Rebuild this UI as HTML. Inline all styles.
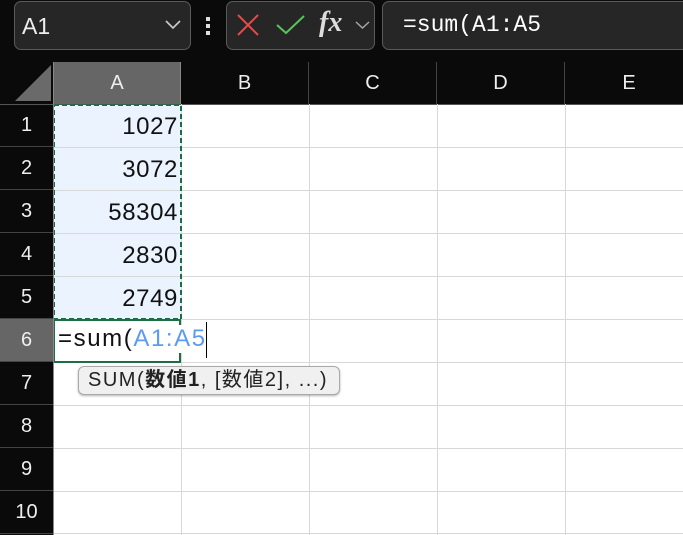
<!DOCTYPE html>
<html><head><meta charset="utf-8"><style>
*{margin:0;padding:0;box-sizing:border-box}
body{width:683px;height:535px;background:#0a0a0a;position:relative;overflow:hidden;font-family:"Liberation Sans","Noto Sans CJK JP",sans-serif}
.a{position:absolute}
.box{position:absolute;background:#262626;border:1px solid #5a5a5a;border-radius:7px}
.ch{position:absolute;top:62px;height:42px;color:#eee;font-size:20px;text-align:center;line-height:42px}
.rh{position:absolute;left:0;width:53px;height:43px;color:#eee;font-size:20px;text-align:center;line-height:43px;border-bottom:1px solid #444}
.num{position:absolute;left:54px;width:124px;text-align:right;font-size:24px;letter-spacing:0.6px;color:#111;height:43px;line-height:46px}
</style></head><body>
<div class="box" style="left:14px;top:1px;width:177px;height:49px"></div>
<div class="a" style="left:22px;top:13px;color:#eee;font-size:23px">A1</div>
<svg class="a" style="left:164px;top:18px" width="20" height="14"><path d="M2 3 L9 10 L16 3" stroke="#ccc" stroke-width="1.6" fill="none"/></svg>
<div class="a" style="left:206px;top:17px;width:4px;height:4px;background:#ddd"></div>
<div class="a" style="left:206px;top:24px;width:4px;height:4px;background:#ddd"></div>
<div class="a" style="left:206px;top:31px;width:4px;height:4px;background:#ddd"></div>
<div class="box" style="left:226px;top:1px;width:149px;height:49px"></div>
<svg class="a" style="left:236px;top:13px" width="26" height="26"><path d="M2 2 L22 22 M22 2 L2 22" stroke="#e84a4a" stroke-width="2" fill="none"/></svg>
<svg class="a" style="left:275px;top:13px" width="32" height="24"><path d="M2 12 L11 20 L29 3" stroke="#5bc35b" stroke-width="2" fill="none"/></svg>
<div class="a" style="left:319px;top:7px;color:#ddd;font-size:28px;font-family:'Liberation Serif',serif;font-style:italic;font-weight:bold">fx</div>
<svg class="a" style="left:354px;top:20px" width="18" height="12"><path d="M2 2 L8.5 8 L15 2" stroke="#aaa" stroke-width="1.4" fill="none"/></svg>
<div class="box" style="left:382px;top:1px;width:310px;height:49px"></div>
<div class="a" style="left:403px;top:12px;color:#fff;font-size:23px;font-family:'Liberation Mono',monospace">=sum(A1:A5</div>

<svg class="a" style="left:15px;top:65px" width="36" height="36"><path d="M36 0 L36 36 L0 36 Z" fill="#6a6a6a"/></svg>
<div class="ch" style="left:53px;width:128px;background:#666;border-left:1px solid #888;border-right:1px solid #888">A</div>
<div class="ch" style="left:181px;width:128px;border-right:1px solid #444">B</div>
<div class="ch" style="left:309px;width:128px;border-right:1px solid #444">C</div>
<div class="ch" style="left:437px;width:128px;border-right:1px solid #444">D</div>
<div class="ch" style="left:565px;width:128px">E</div>
<div class="a" style="left:0;top:104px;width:683px;height:1px;background:#555"></div>

<div class="a" style="left:53px;top:105px;width:630px;height:430px;background:#fff"></div>
<div class="a" style="left:54px;top:105px;width:127px;height:214px;background:#ebf3fe"></div>
<svg class="a" style="left:53px;top:104px" width="630" height="431">
<g stroke="#d8d8d8" stroke-width="1">
<path d="M0 43.5H630M0 86.5H630M0 129.5H630M0 172.5H630M0 215.5H630M0 258.5H630M0 301.5H630M0 344.5H630M0 387.5H630M0 429.5H630"/>
<path d="M128.5 0V431M256.5 0V431M384.5 0V431M512.5 0V431"/>
</g>
<rect x="1" y="1" width="127" height="214" fill="none" stroke="#1e6e44" stroke-width="2" stroke-dasharray="5 3"/>
<rect x="1" y="216" width="126" height="42" fill="#fff" stroke="#1e6e44" stroke-width="2"/>
</svg>
<div class="rh" style="top:104px">1</div>
<div class="rh" style="top:147px">2</div>
<div class="rh" style="top:190px">3</div>
<div class="rh" style="top:233px">4</div>
<div class="rh" style="top:276px">5</div>
<div class="rh" style="top:319px;background:#666">6</div>
<div class="rh" style="top:362px">7</div>
<div class="rh" style="top:405px">8</div>
<div class="rh" style="top:448px">9</div>
<div class="rh" style="top:491px">10</div>
<div class="a" style="left:53px;top:104px;width:1px;height:431px;background:#888"></div>

<div class="num" style="top:104px">1027</div>
<div class="num" style="top:147px">3072</div>
<div class="num" style="top:190px">58304</div>
<div class="num" style="top:233px">2830</div>
<div class="num" style="top:276px">2749</div>
<div class="a" style="left:58px;top:325px;font-size:24px;letter-spacing:1.6px;color:#111;white-space:nowrap;background:#fff">=sum(<span style="color:#5b9bf5">A1:A5</span></div>
<div class="a" style="left:206px;top:322px;width:1px;height:36px;background:#000"></div>
<div class="a" style="left:78px;top:366px;width:262px;height:29px;background:#f0f0f0;border:1px solid #aaa;border-radius:6px;box-shadow:0 1px 2px rgba(0,0,0,.3);font-size:20px;letter-spacing:1.5px;color:#222;line-height:27px;padding-left:9px;white-space:nowrap">SUM(<b>数値1</b>, [数値2], ...)</div>
</body></html>
